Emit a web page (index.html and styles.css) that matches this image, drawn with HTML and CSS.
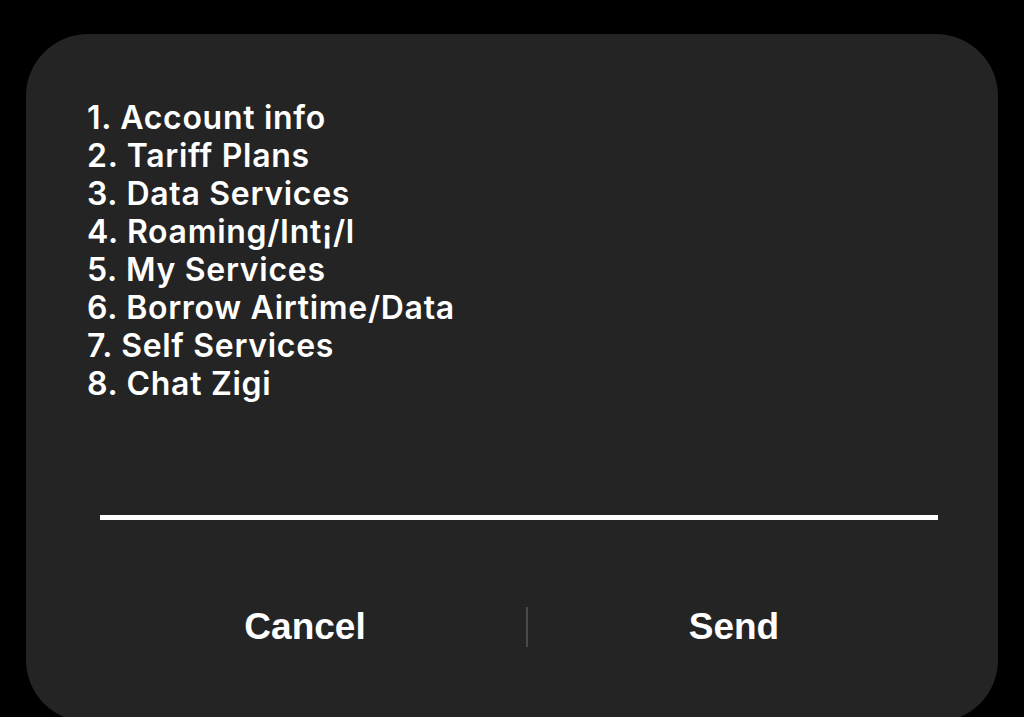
FILE: index.html
```html
<!DOCTYPE html>
<html lang="en">
<head>
    <meta charset="UTF-8">
    <meta name="viewport" content="width=device-width, initial-scale=1.0">
    <title>USSD</title>
    <link rel="stylesheet" href="styles.css">
</head>
<body>
    <div class="dialog">
        <ul class="menu">
            <li>1. Account info</li>
            <li>2. Tariff Plans</li>
            <li>3. Data Services</li>
            <li>4. Roaming/Int¡/l</li>
            <li>5. My Services</li>
            <li>6. Borrow Airtime/Data</li>
            <li>7. Self Services</li>
            <li>8. Chat Zigi</li>
        </ul>
        <div class="input-line"></div>
        <div class="actions">
            <button class="cancel">Cancel</button>
            <span class="divider"></span>
            <button class="send">Send</button>
        </div>
    </div>
</body>
</html>
```

FILE: styles.css
```css
* {
    box-sizing: border-box;
}
html, body {
    margin: 0;
    height: 717px;
    overflow: hidden;
    background-color: #000;
}
.dialog {
    margin: 34px 0 0 26px;
    width: 972px;
    height: 688px;
    background-color: #242424;
    border-radius: 62px;

    padding-top: 65px;
    padding-left: 61px;
}

/* 菜单列表 */
.menu {
    list-style: none;
    margin: 0;
    padding: 0;
    font-family: Inter, "Noto Sans", sans-serif;
    font-weight: 600;
    font-size: 32px;
    letter-spacing: 0.7px;
    line-height: 38px;
    color: #fff;
}

/* 输入框下划线 */
.input-line {
    width: 838px;
    height: 5px;
    margin-top: 112px;
    margin-left: 13px;
    background-color: #fff;
}

/* 按钮 */
.actions {
    display: grid;
    grid-template-columns: 442px 2px 412px;
    align-items: center;
    margin-left: -3px;
    margin-top: 85px;
    height: 44px;
}
.actions button {
    background: none;
    border: none;
    padding: 0;
    color: #fff;
    font-family: "Liberation Sans", Arial, sans-serif;
    font-weight: bold;
    font-size: 37px;
    cursor: pointer;
}
.divider {
    width: 2px;
    height: 40px;
    background-color: #4a4a4a;
}
```
